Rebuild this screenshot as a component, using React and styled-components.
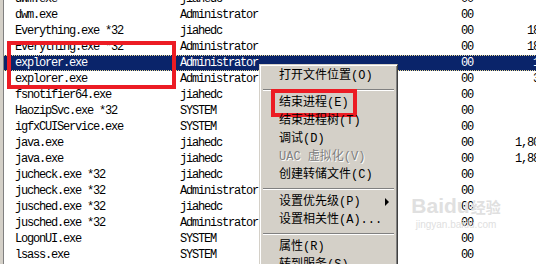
import React from "react";
import styled, { createGlobalStyle, css } from "styled-components";

const Global = createGlobalStyle`
  html, body { margin: 0; padding: 0; overflow: hidden; background: #fff; }
  #root { width: 536px; height: 264px; }
`;

const Page = styled.div`
  position: relative;
  width: 536px;
  height: 264px;
  overflow: hidden;
  background: #fff;
  display: flex;
`;

const Frame = styled.div`
  display: flex;
  flex: 1;
  border-left: 3px solid #d4d0c8;
`;

const List = styled.div`
  flex: 1;
  display: flex;
  flex-direction: column;
  border-left: 1px solid #808080;
  margin-top: -9px;
`;

const Row = styled.div`
  box-sizing: border-box;
  display: grid;
  grid-template-columns: 165px 281px 30px 90px;
  height: 16px;
  line-height: 16px;
  padding-left: 11px;
  font-family: "Liberation Mono", monospace;
  font-size: 12px;
  letter-spacing: -1.2px;
  color: #000;
  white-space: pre;
  ${(p) =>
    p.$selected &&
    css`
      background: #0a246a;
      color: #fff;
      border-top: 1px dotted #e8d890;
      border-bottom: 1px dotted #e8d890;
      line-height: 14px;
    `}
`;

const Cell = styled.span`
  text-align: ${(p) => (p.$right ? "right" : "left")};
`;

const Highlight = styled.div`
  position: absolute;
  border: 4px solid #ec1c24;
  box-sizing: border-box;
  pointer-events: none;
`;

const ListMark = styled(Highlight)`
  left: 7px;
  top: 41px;
  width: 169px;
  height: 48px;
`;

const Menu = styled.div`
  position: absolute;
  left: 259px;
  top: 64px;
  width: 139px;
  height: 230px;
  box-sizing: border-box;
  background: #d4d0c8;
  border-top: 1px solid #d4d0c8;
  border-left: 1px solid #d4d0c8;
  border-right: 1px solid #404040;
  border-bottom: 1px solid #404040;
  box-shadow: inset 1px 1px 0 #fff, inset -1px -1px 0 #808080;
  padding: 2px 2px;
  display: flex;
  flex-direction: column;
  font-family: "Liberation Mono", "Noto Sans CJK SC", monospace;
  font-size: 12px;
`;

const Item = styled.div`
  position: relative;
  height: 18px;
  line-height: 18px;
  padding-left: 17px;
  display: flex;
  align-items: center;
  justify-content: space-between;
  color: ${(p) => (p.$disabled ? "#808080" : "#000")};
  text-shadow: ${(p) => (p.$disabled ? "1px 1px 0 #fff" : "none")};
  white-space: nowrap;
`;

const Label = styled.span`
  letter-spacing: 0;
`;

const Arrow = styled.span`
  width: 0;
  height: 0;
  margin-right: 6px;
  border-top: 4px solid transparent;
  border-bottom: 4px solid transparent;
  border-left: 4px solid #000;
`;

const Separator = styled.div`
  height: 9px;
  display: flex;
  flex-direction: column;
  justify-content: center;
  padding: 0 1px;
  &::before {
    content: "";
    display: block;
    border-top: 1px solid #808080;
    border-bottom: 1px solid #fff;
  }
`;

const ItemMark = styled(Highlight)`
  left: 9px;
  top: -5px;
  width: 86px;
  height: 28px;
`;

const Watermark = styled.div`
  position: absolute;
  left: 413px;
  top: 194px;
  width: 86px;
  display: flex;
  flex-direction: column;
  align-items: center;
  color: #e0e0e0;
  pointer-events: none;
  font-family: "Liberation Sans", "Noto Sans CJK SC", sans-serif;
`;

const WmTitle = styled.div`
  display: flex;
  align-items: flex-end;
  font-size: 21px;
  font-weight: bold;
  line-height: 24px;
  white-space: nowrap;
`;

const WmCjk = styled.span`
  font-size: 15px;
  line-height: 20px;
  margin-left: 1px;
`;

const WmUrl = styled.div`
  font-size: 10px;
  line-height: 14px;
  white-space: nowrap;
`;

const rows = [
  ["dwm.exe", "jiahedc", "00", ""],
  ["dwm.exe", "Administrator", "00", ""],
  ["Everything.exe *32", "jiahedc", "00", "186,420 K"],
  ["Everything.exe *32", "Administrator", "00", "184,316 K"],
  ["explorer.exe", "Administrator", "00", "19,904 K", true],
  ["explorer.exe", "Administrator", "00", "36,112 K"],
  ["fsnotifier64.exe", "jiahedc", "00", ""],
  ["HaozipSvc.exe *32", "SYSTEM", "00", ""],
  ["igfxCUIService.exe", "SYSTEM", "00", ""],
  ["java.exe", "jiahedc", "00", "1,804,220 K"],
  ["java.exe", "jiahedc", "00", "1,886,512 K"],
  ["jucheck.exe *32", "jiahedc", "00", ""],
  ["jucheck.exe *32", "Administrator", "00", ""],
  ["jusched.exe *32", "jiahedc", "00", ""],
  ["jusched.exe *32", "Administrator", "00", ""],
  ["LogonUI.exe", "SYSTEM", "00", ""],
  ["lsass.exe", "SYSTEM", "00", ""],
];

const menu = [
  { label: "打开文件位置(O)" },
  { sep: true },
  { label: "结束进程(E)", mark: true },
  { label: "结束进程树(T)" },
  { label: "调试(D)" },
  { label: "UAC 虚拟化(V)", disabled: true },
  { label: "创建转储文件(C)" },
  { sep: true },
  { label: "设置优先级(P)", sub: true },
  { label: "设置相关性(A)..." },
  { sep: true },
  { label: "属性(R)" },
  { label: "转到服务(S)" },
];

export default function App() {
  return (
    <>
      <Global />
      <Page>
        <Frame>
          <List>
            {rows.map((r, i) => (
              <Row key={i} $selected={r[4]}>
                <Cell>{r[0]}</Cell>
                <Cell>{r[1]}</Cell>
                <Cell>{r[2]}</Cell>
                <Cell $right>{r[3]}</Cell>
              </Row>
            ))}
          </List>
        </Frame>
        <ListMark />
        <Watermark>
          <WmTitle>
            Baidu<WmCjk>经验</WmCjk>
          </WmTitle>
          <WmUrl>jingyan.baidu.com</WmUrl>
        </Watermark>
        <Menu>
          {menu.map((m, i) =>
            m.sep ? (
              <Separator key={i} />
            ) : (
              <Item key={i} $disabled={m.disabled}>
                <Label>{m.label}</Label>
                {m.sub && <Arrow />}
                {m.mark && <ItemMark />}
              </Item>
            )
          )}
        </Menu>
      </Page>
    </>
  );
}
